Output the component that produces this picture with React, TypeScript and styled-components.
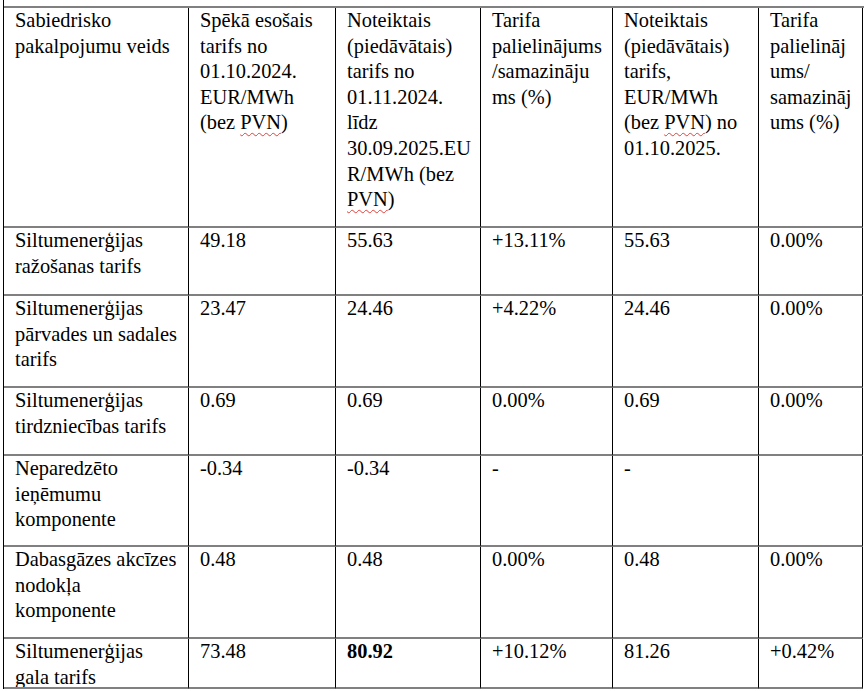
import React from "react";
import styled, { createGlobalStyle } from "styled-components";

const GlobalStyle = createGlobalStyle`
  html, body {
    margin: 0;
    padding: 0;
    background: #ffffff;
  }
  body {
    font-family: "Liberation Serif", "Times New Roman", serif;
    color: #000000;
  }
`;

const Page = styled.div`
  padding-left: 3px;
  width: 866px;
  height: 691px;
  overflow: hidden;
  box-sizing: border-box;
`;

const Sheet = styled.div`
  width: 861px;
  box-sizing: border-box;
  border-left: 1px solid #000000;
  padding-top: 6px;
`;

const TariffTable = styled.div`
  display: grid;
  grid-template-columns: 185px 147px 145px 132px 146px 104px;
  grid-template-rows: 220px 68px 92px 68px 91px 92px 50px;
  border-top: 2px solid #808080;
`;

const Cell = styled.div`
  box-sizing: border-box;
  border-right: 1px solid #000000;
  border-bottom: 2px solid #808080;
  padding: 0 0 0 11px;
  font-size: 20.4px;
  line-height: 25.6px;
  overflow: hidden;
`;

const Line = styled.span`
  display: block;
  white-space: nowrap;
`;

const Spell = styled.span`
  text-decoration-line: underline;
  text-decoration-style: wavy;
  text-decoration-color: #e0403a;
  text-decoration-thickness: 1px;
  text-underline-offset: 3px;
`;

const Strong = styled.span`
  font-weight: 700;
`;

type Lines = React.ReactNode[];

const PVN = <Spell>PVN</Spell>;

const header: Lines[] = [
  ["Sabiedrisko", "pakalpojumu veids"],
  ["Spēkā esošais", "tarifs no", "01.10.2024.", "EUR/MWh", <>(bez {PVN})</>],
  [
    "Noteiktais",
    "(piedāvātais)",
    "tarifs no",
    "01.11.2024.",
    "līdz",
    "30.09.2025.EU",
    "R/MWh (bez",
    <>{PVN})</>,
  ],
  ["Tarifa", "palielinājums", "/samazināju", "ms (%)"],
  ["Noteiktais", "(piedāvātais)", "tarifs,", "EUR/MWh", <>(bez {PVN}) no</>, "01.10.2025."],
  ["Tarifa", "palielināj", "ums/", "samazināj", "ums (%)"],
];

const rows: Lines[][] = [
  [["Siltumenerģijas", "ražošanas tarifs"], ["49.18"], ["55.63"], ["+13.11%"], ["55.63"], ["0.00%"]],
  [
    ["Siltumenerģijas", "pārvades un sadales", "tarifs"],
    ["23.47"],
    ["24.46"],
    ["+4.22%"],
    ["24.46"],
    ["0.00%"],
  ],
  [["Siltumenerģijas", "tirdzniecības tarifs"], ["0.69"], ["0.69"], ["0.00%"], ["0.69"], ["0.00%"]],
  [["Neparedzēto", "ieņēmumu", "komponente"], ["-0.34"], ["-0.34"], ["-"], ["-"], []],
  [["Dabasgāzes akcīzes", "nodokļa", "komponente"], ["0.48"], ["0.48"], ["0.00%"], ["0.48"], ["0.00%"]],
  [
    ["Siltumenerģijas", "gala tarifs"],
    ["73.48"],
    [<Strong>80.92</Strong>],
    ["+10.12%"],
    ["81.26"],
    ["+0.42%"],
  ],
];

const CellLines: React.FC<{ lines: Lines }> = ({ lines }) => (
  <Cell>
    {lines.map((l, i) => (
      <Line key={i}>{l}</Line>
    ))}
  </Cell>
);

export default function App() {
  return (
    <>
      <GlobalStyle />
      <Page>
        <Sheet>
          <TariffTable>
            {header.map((c, i) => (
              <CellLines key={`h${i}`} lines={c} />
            ))}
            {rows.map((r, ri) =>
              r.map((c, ci) => <CellLines key={`r${ri}c${ci}`} lines={c} />)
            )}
          </TariffTable>
        </Sheet>
      </Page>
    </>
  );
}
